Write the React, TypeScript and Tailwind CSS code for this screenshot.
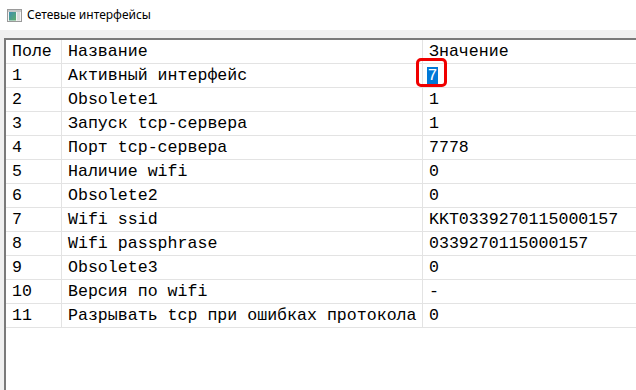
import React from "react";

const rows = [
  ["1", "Активный интерфейс", "7"],
  ["2", "Obsolete1", "1"],
  ["3", "Запуск tcp-сервера", "1"],
  ["4", "Порт tcp-сервера", "7778"],
  ["5", "Наличие wifi", "0"],
  ["6", "Obsolete2", "0"],
  ["7", "Wifi ssid", "KKT0339270115000157"],
  ["8", "Wifi passphrase", "0339270115000157"],
  ["9", "Obsolete3", "0"],
  ["10", "Версия по wifi", "-"],
  ["11", "Разрывать tcp при ошибках протокола", "0"],
];

function WindowIcon() {
  return (
    <svg width="15" height="13" viewBox="0 0 15 13">
      <defs>
        <linearGradient id="pane" x1="0" y1="0" x2="1" y2="1">
          <stop offset="0" stopColor="#3f8fb0" />
          <stop offset="1" stopColor="#5fae6a" />
        </linearGradient>
      </defs>
      <rect x="0.5" y="0.5" width="14" height="12" fill="#f4f4f4" stroke="#9a9a9a" />
      <rect x="1" y="1" width="13" height="2" fill="#c9c9c9" />
      <rect x="2" y="3" width="7" height="8.5" fill="url(#pane)" />
      <rect x="10" y="3" width="3" height="8.5" fill="#dcdcdc" />
    </svg>
  );
}

function Cell({ children, last }: { children: React.ReactNode; last?: boolean }) {
  return (
    <div
      className={`h-[24px] flex items-center pl-[6px] border-b border-[#e3e3e3] whitespace-nowrap overflow-hidden ${
        last ? "" : "border-r"
      }`}
    >
      {children}
    </div>
  );
}

export default function App() {
  return (
    <div className="w-[636px] h-[390px] bg-[#f0f0f0] flex flex-col overflow-hidden">
      <div className="h-[30px] bg-white flex items-center pl-[7px] gap-[5px] shrink-0">
        <WindowIcon />
        <span className="text-[12px] text-black font-['Noto_Sans',sans-serif]">
          Сетевые интерфейсы
        </span>
      </div>
      <div className="h-[8px] shrink-0" />
      <div className="flex-1 ml-[4px] border-l-2 border-t-2 border-l-[#7a7a7a] border-t-[#7a7a7a] bg-white relative">
        <div className="grid grid-cols-[56px_361px_1fr] text-[16.6px] leading-[23px] text-black font-['Liberation_Mono','Courier_New',monospace]">
          <Cell>Поле</Cell>
          <Cell>Название</Cell>
          <Cell last>Значение</Cell>
          {rows.map((r, i) => (
            <React.Fragment key={i}>
              <Cell>{r[0]}</Cell>
              <Cell>{r[1]}</Cell>
              <Cell last>
                {i === 0 ? (
                  <span className="ml-[-2px] bg-[#0078d7] text-white leading-[17px] h-[17px] px-[0.5px]">
                    {r[2]}
                  </span>
                ) : (
                  r[2]
                )}
              </Cell>
            </React.Fragment>
          ))}
        </div>
        <div className="absolute left-[410px] top-[18px] w-[31px] h-[29px] border-[3px] border-[#f00000] rounded-[5px]" />
      </div>
    </div>
  );
}
